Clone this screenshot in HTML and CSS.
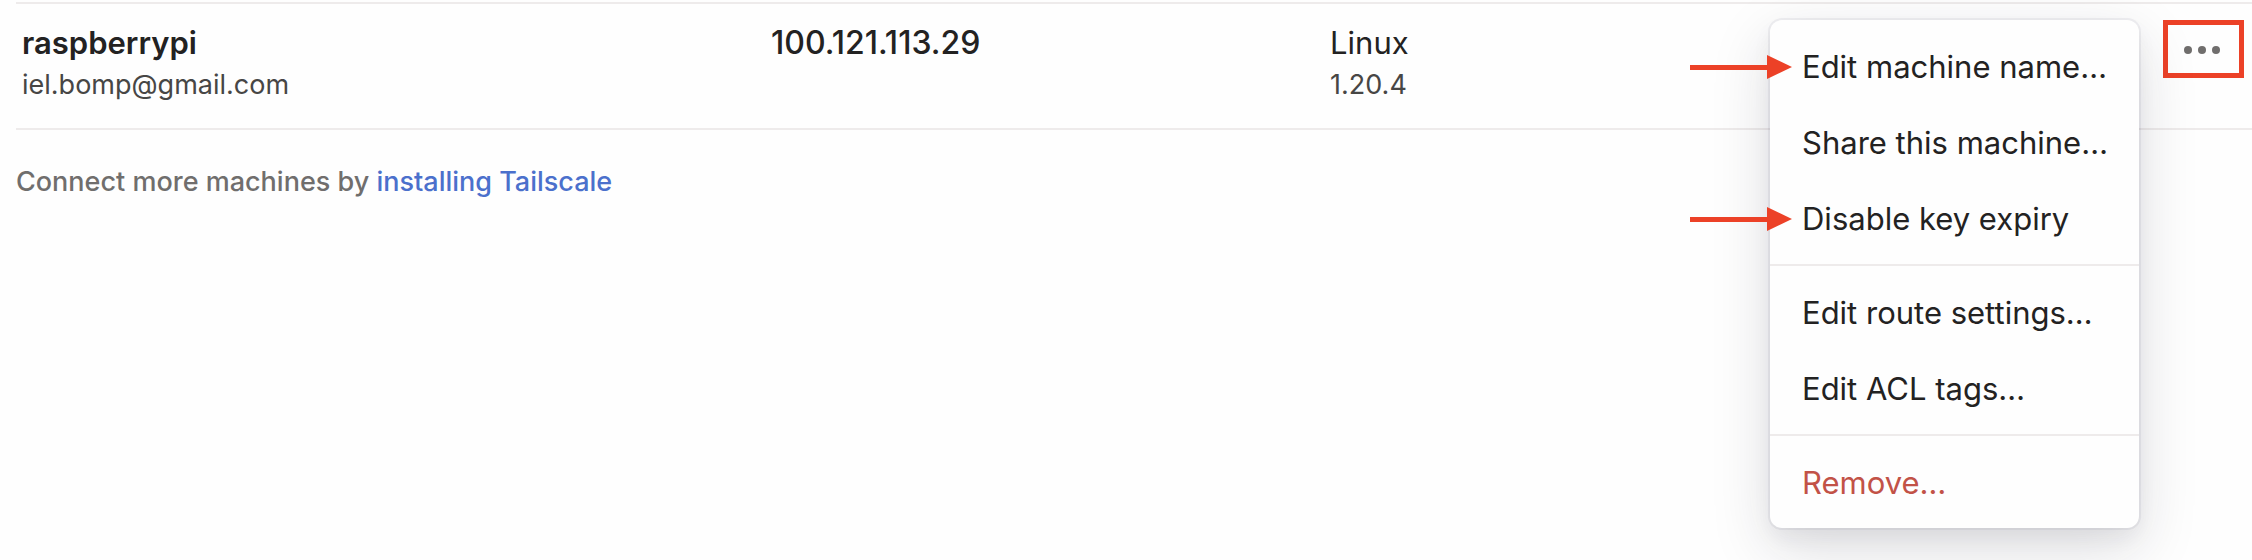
FILE: index.html
```html
<!DOCTYPE html>
<html lang="en">
<head>
<meta charset="utf-8">
<meta name="viewport" content="width=device-width, initial-scale=1">
<title>Machines</title>
<link rel="stylesheet" href="styles.css">
</head>
<body>
<main class="page">
  <table class="machines">
    <colgroup>
      <col class="col-name">
      <col class="col-address">
      <col class="col-system">
      <col class="col-actions">
    </colgroup>
    <tbody>
      <tr>
        <td>
          <div class="primary name">raspberrypi</div>
          <div class="secondary">iel.bomp@gmail.com</div>
        </td>
        <td><div class="primary address">100.121.113.29</div></td>
        <td>
          <div class="primary">Linux</div>
          <div class="secondary">1.20.4</div>
        </td>
        <td class="actions">
          <div class="dropdown">
            <button class="more" type="button" aria-label="Machine options" aria-expanded="true">
              <svg width="36" height="8" viewBox="0 0 36 8" fill="currentColor" aria-hidden="true">
                <circle cx="4" cy="4" r="4"/><circle cx="18" cy="4" r="4"/><circle cx="32" cy="4" r="4"/>
              </svg>
            </button>
            <div class="menu" role="menu">
              <div class="group">
                <button class="item" type="button" role="menuitem">Edit machine name…
                  <svg class="arrow" width="102" height="24" viewBox="0 0 102 24" fill="currentColor" aria-hidden="true"><path d="M0 10h77V0l25 12-25 12v-9H0z"/></svg>
                </button>
                <button class="item" type="button" role="menuitem">Share this machine…</button>
                <button class="item" type="button" role="menuitem">Disable key expiry
                  <svg class="arrow" width="102" height="24" viewBox="0 0 102 24" fill="currentColor" aria-hidden="true"><path d="M0 10h77V0l25 12-25 12v-9H0z"/></svg>
                </button>
              </div>
              <div class="group">
                <button class="item" type="button" role="menuitem">Edit route settings…</button>
                <button class="item" type="button" role="menuitem">Edit ACL tags…</button>
              </div>
              <div class="group">
                <button class="item danger" type="button" role="menuitem">Remove…</button>
              </div>
            </div>
          </div>
        </td>
      </tr>
    </tbody>
  </table>
  <p class="hint">Connect more machines by <a href="#">installing Tailscale</a></p>
</main>
</body>
</html>
```
FILE: styles.css
```css
* {
  box-sizing: border-box;
}

body {
  margin: 0;
  background: #fefefe;
  color: #232222;
  font-family: Inter, "Liberation Sans", sans-serif;
  font-size: 31px;
}

.page {
  padding: 2px 0 0 16px;
  overflow: hidden;
  min-height: 100vh;
}

.machines {
  width: 100%;
  table-layout: fixed;
  border-spacing: 0;
}

.col-name { width: 33.5%; }
.col-address { width: 25%; }
.col-actions { width: 89px; }

.machines td {
  padding: 16px 6px 24px;
  border-top: 2px solid #eeebeb;
  border-bottom: 2px solid #eeebeb;
  vertical-align: top;
}

.primary {
  line-height: 46px;
}

.name { font-weight: 600; }

.address {
  font-size: 32px;
  font-weight: 500;
}

.secondary {
  color: #474645;
  font-size: 27px;
  line-height: 38px;
}

.machines .actions {
  padding: 16px 8px 0 0;
}

.dropdown {
  position: relative;
}

.more {
  display: flex;
  align-items: center;
  justify-content: center;
  width: 100%;
  height: 58px;
  padding: 2px 4px 0 0;
  border: 5px solid #ec4127;
  background: #fefefe;
  color: #706e6d;
}

.menu {
  position: absolute;
  top: 0;
  right: 100%;
  width: 369px;
  margin-right: 24px;
  border-radius: 12px;
  background: #fefefe;
  box-shadow: 0 0 0 2px rgba(30, 30, 60, 0.06), 0 20px 60px rgba(30, 30, 50, 0.15), 0 10px 20px rgba(30, 30, 50, 0.05);
}

.group {
  padding: 9px 0 7px;
}

.group + .group {
  border-top: 2px solid #eeebeb;
}

.item {
  position: relative;
  display: block;
  width: 100%;
  padding: 0 32px;
  border: 0;
  background: none;
  color: inherit;
  font: inherit;
  line-height: 76px;
  text-align: left;
  white-space: nowrap;
}

.danger { color: #c25247; }

.arrow {
  position: absolute;
  top: 26px;
  right: 347px;
  color: #ec4127;
}

.hint {
  margin: 32px 0 0;
  color: #706e6d;
  font-size: 27px;
  font-weight: 500;
  line-height: 40px;
}

.hint a {
  color: #4b70cc;
  text-decoration: none;
}
```
